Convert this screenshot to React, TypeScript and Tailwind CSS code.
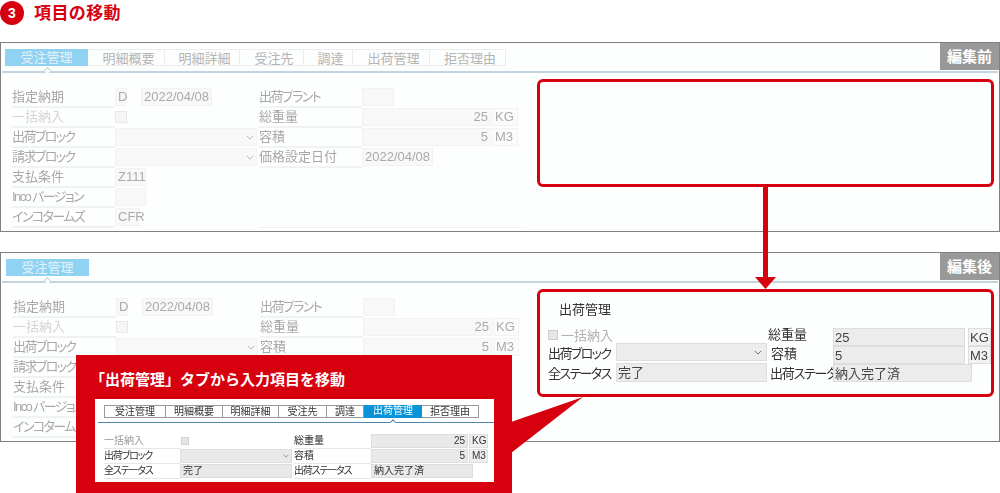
const tabs = [
  { name: "受注管理", w: "w-[83px]" },
  { name: "明細概要", w: "w-[77px]" },
  { name: "明細詳細", w: "w-[75px]" },
  { name: "受注先", w: "w-[64px]" },
  { name: "調達", w: "w-[49px]" },
  { name: "出荷管理", w: "w-[77px]" },
  { name: "拒否理由", w: "w-[76px]" },
];

const miniTabs = [
  { name: "受注管理", w: "w-[62px]" },
  { name: "明細概要", w: "w-[57px]" },
  { name: "明細詳細", w: "w-[56px]" },
  { name: "受注先", w: "w-[48px]" },
  { name: "調達", w: "w-[37px]" },
  { name: "出荷管理", w: "w-[58px]" },
  { name: "拒否理由", w: "w-[57px]" },
];

function Chevron({ className }: { className: string }) {
  return (
    <svg viewBox="0 0 10 6" className={className} fill="none" stroke="currentColor" strokeWidth="1.2">
      <path d="M1 1l4 4 4-4" />
    </svg>
  );
}

function Label({ children, faint, tight }: { children: React.ReactNode; faint?: boolean; tight?: boolean }) {
  return (
    <div className={`h-[20px] leading-[18px] border-b-2 border-[#f1f2f2] text-[13px] whitespace-nowrap [font-feature-settings:'palt'] ${tight ? "tracking-[-1.6px]" : ""} ${faint ? "text-[#d4d4d4]" : "text-[#a8a8a8]"}`}>
      {children}
    </div>
  );
}

function Field({ className, children }: { className: string; children?: React.ReactNode }) {
  return (
    <div className={`h-[18px] bg-[#f8f8f8] border border-[#f2f2f2] leading-[16px] text-[13px] text-[#aaaaaa] px-[2px] ${className}`}>
      {children}
    </div>
  );
}

function BackgroundForm() {
  return (
    <div className="grid grid-cols-[103px_144px_103px_160px] pl-[11px] blur-[0.3px]">
      <Label>指定納期</Label>
      <div className="flex gap-[14px]">
        <Field className="w-[12px]">D</Field>
        <Field className="w-[71px]">2022/04/08</Field>
      </div>
      <Label tight>出荷プラント</Label>
      <Field className="w-[32px]" />

      <Label faint>一括納入</Label>
      <div className="pt-[3px]">
        <div className="w-[12px] h-[12px] bg-[#f6f6f6] border border-[#e8e8e8]" />
      </div>
      <Label>総重量</Label>
      <div className="flex gap-[1px]">
        <Field className="w-[129px] text-right">25</Field>
        <Field className="w-[26px] bg-[#fbfbfb]">KG</Field>
      </div>

      <Label tight>出荷ブロック</Label>
      <div className="flex items-start">
        <Field className="w-[142px] flex items-center justify-end">
          <Chevron className="w-[8px] h-[5px] text-[#b5b5b5]" />
        </Field>
      </div>
      <Label>容積</Label>
      <div className="flex gap-[1px]">
        <Field className="w-[129px] text-right">5</Field>
        <Field className="w-[26px] bg-[#fbfbfb]">M3</Field>
      </div>

      <Label tight>請求ブロック</Label>
      <div className="flex items-start">
        <Field className="w-[142px] flex items-center justify-end">
          <Chevron className="w-[8px] h-[5px] text-[#b5b5b5]" />
        </Field>
      </div>
      <Label>価格設定日付</Label>
      <Field className="w-[71px]">2022/04/08</Field>

      <Label>支払条件</Label>
      <Field className="w-[31px]">Z111</Field>
      <div className="col-span-2" />

      <Label tight>Inco バージョン</Label>
      <Field className="w-[31px]" />
      <div className="col-span-2" />

      <Label tight>インコタームズ</Label>
      <Field className="w-[25px]">CFR</Field>
      <div className="col-span-2 border-b border-[#f3f3f3] h-[20px]" />
    </div>
  );
}

function Panel({ tag, allTabs, shift }: { tag: string; allTabs: boolean; shift: string }) {
  const list = allTabs ? tabs : tabs.slice(0, 1);
  return (
    <section className="relative h-[190px] border border-[#808080] bg-[#fdfefe]">
      <div className={`flex h-[17px] mt-[6px] ${shift}`}>
        {list.map((t, i) => (
          <div
            key={t.name}
            className={`${t.w} text-center text-[13px] leading-[17px] ${
              i === 0
                ? "bg-[#90d2f1] text-[#e4f3fb]"
                : "border-y border-r border-[#ececec] text-[#b4b4b4] pl-[5px]"
            }`}
          >
            {t.name}
          </div>
        ))}
      </div>
      <div className="relative mt-[5px] h-[2px] bg-[#c3d4df] mx-[1px]">
        <div className="absolute left-[43px] top-[-3px] w-[5px] h-[5px] rotate-45 bg-[#fdfefe] border-l border-t border-[#c3d4df]" />
      </div>
      <div className={`mt-[15px] ${allTabs ? "" : "pl-[1px]"}`}>
        <BackgroundForm />
      </div>
      <div className="absolute right-0 top-0 w-[59px] h-[27px] bg-[#999999] text-white text-[15px] font-bold leading-[27px] text-center">
        {tag}
      </div>
    </section>
  );
}

function MiniLabel({ children, faint, strong, tight }: { children: React.ReactNode; faint?: boolean; strong?: boolean; tight?: boolean }) {
  return (
    <div className={`h-[15px] leading-[14px] text-[10px] whitespace-nowrap border-b border-[#e6e6e6] [font-feature-settings:'palt'] ${tight ? "tracking-[-1.2px]" : ""} ${faint ? "text-[#9c9c9c]" : strong ? "text-[#222222]" : "text-[#333333]"}`}>
      {children}
    </div>
  );
}

function MiniField({ className, children }: { className: string; children?: React.ReactNode }) {
  return (
    <div className={`h-[14px] bg-[#e9e9e9] border border-[#dedede] px-[2px] leading-[12px] text-[10px] text-[#333333] ${className}`}>
      {children}
    </div>
  );
}

function Callout() {
  return (
    <div className="absolute left-[76px] top-[355px] w-[436px] h-[138px] bg-[#d7000f]">
      <p className="pl-[14px] pt-[14px] h-[44px] text-[15px] leading-[22px] font-bold text-white whitespace-nowrap">
        「出荷管理」タブから入力項目を移動
      </p>
      <div className="ml-[19px] w-[399px] h-[83px] bg-white blur-[0.2px]">
        <div className="flex h-[13px] pl-[9px] translate-y-[6px]">
          {miniTabs.map((t) => (
            <div
              key={t.name}
              className={`${t.w} text-center text-[10px] leading-[12px] ${
                t.name === "出荷管理"
                  ? "bg-[#0a93d6] text-white"
                  : "border border-l-0 border-[#9a9a9a] first:border-l text-[#333333]"
              }`}
            >
              {t.name}
            </div>
          ))}
        </div>
        <div className="relative mt-[10px] ml-[3px] h-[1px] bg-[#4f86ad]">
          <div className="absolute left-[293px] top-[-2px] w-[4px] h-[4px] rotate-45 bg-white border-l border-t border-[#4f86ad]" />
        </div>
        <div className="grid grid-cols-[76px_114px_77px_120px] pl-[9px] mt-[11px]">
          <MiniLabel faint>一括納入</MiniLabel>
          <div className="pl-[1px] pt-[3px]">
            <div className="w-[8px] h-[8px] bg-[#e6e6e6] border border-[#d0d0d0]" />
          </div>
          <MiniLabel strong>総重量</MiniLabel>
          <div className="flex gap-[1px]">
            <MiniField className="w-[97px] text-right">25</MiniField>
            <MiniField className="w-[19px] bg-[#efefef]">KG</MiniField>
          </div>

          <MiniLabel tight>出荷ブロック</MiniLabel>
          <MiniField className="w-[112px] flex items-center justify-end">
            <Chevron className="w-[6px] h-[4px] text-[#777777]" />
          </MiniField>
          <MiniLabel>容積</MiniLabel>
          <div className="flex gap-[1px]">
            <MiniField className="w-[97px] text-right">5</MiniField>
            <MiniField className="w-[19px] bg-[#efefef]">M3</MiniField>
          </div>

          <MiniLabel tight>全ステータス</MiniLabel>
          <MiniField className="w-[112px]">完了</MiniField>
          <MiniLabel tight>出荷ステータス</MiniLabel>
          <MiniField className="w-[102px]">納入完了済</MiniField>
        </div>
      </div>
    </div>
  );
}

function MovedField({ className, children }: { className: string; children?: React.ReactNode }) {
  return (
    <div className={`bg-[#ececec] border border-[#dddddd] px-[1px] leading-[18px] text-[13px] text-[#444444] ${className}`}>
      {children}
    </div>
  );
}

function AfterBox() {
  return (
    <div className="absolute left-[537px] top-[289px] w-[457px] h-[108px] border-[3px] border-[#d7000f] rounded-[6px] bg-[#fdfefe] blur-[0.25px]">
      <p className="pl-[19px] pt-[8px] h-[36px] text-[13px] leading-[20px] text-[#333333]">出荷管理</p>
      <div className="grid grid-cols-[68px_153px_64px_158px] pl-[8px] text-[13px] leading-[15px] text-[#333333] whitespace-nowrap [font-feature-settings:'palt']">
        <div className="flex items-center gap-[3px] h-[20px] -mt-[3px] text-[#b0b0b0]">
          <div className="w-[10px] h-[10px] shrink-0 bg-[#e6e6e6] border border-[#cccccc]" />
          一括納入
        </div>
        <div />
        <div className="-ml-[1px] -mt-[1px]">総重量</div>
        <div className="flex gap-[3px]">
          <MovedField className="h-[18px] w-[132px]">25</MovedField>
          <MovedField className="h-[18px] w-[23px] bg-[#f3f3f3]">KG</MovedField>
        </div>

        <div className="h-[20px] tracking-[-1.6px]">出荷ブロック</div>
        <MovedField className="h-[18px] -mt-[3px] w-[151px] flex items-center justify-end pr-[4px]">
          <Chevron className="w-[8px] h-[5px] text-[#666666]" />
        </MovedField>
        <div className="pl-[2px]">容積</div>
        <div className="flex gap-[3px]">
          <MovedField className="h-[18px] w-[132px]">5</MovedField>
          <MovedField className="h-[18px] w-[23px] bg-[#f3f3f3]">M3</MovedField>
        </div>

        <div className="tracking-[-1.6px]">全ステータス</div>
        <MovedField className="h-[19px] -mt-[3px] w-[151px]">完了</MovedField>
        <div className="overflow-hidden pl-[1px] tracking-[-1.2px]">出荷ステータス</div>
        <MovedField className="h-[18px] -mt-[2px] w-[139px]">納入完了済</MovedField>
      </div>
    </div>
  );
}

export default function App() {
  return (
    <main className="relative w-[1000px] h-[493px] overflow-hidden bg-white font-['Liberation_Sans','Noto_Sans_CJK_JP',sans-serif]">
      <header className="flex items-start gap-[10px] h-[42px] pt-[1px]">
        <div className="w-[24px] h-[24px] rounded-full bg-[#d7000f] text-white text-[14px] font-bold leading-[24px] text-center">
          3
        </div>
        <h1 className="text-[17px] leading-[25px] font-bold text-[#d7000f] tracking-[0.4px]">項目の移動</h1>
      </header>

      <div className="flex flex-col gap-[20px]">
        <Panel tag="編集前" allTabs shift="ml-[4px]" />
        <Panel tag="編集後" allTabs={false} shift="ml-[5px]" />
      </div>

      {/* red outline, arrow and callout sit over the panels */}
      <div className="absolute left-[537px] top-[79px] w-[457px] h-[108px] border-[3px] border-[#d7000f] rounded-[6px]" />
      <div className="absolute left-[763px] top-[187px] w-[5px] h-[91px] bg-[#d7000f]" />
      <svg className="absolute left-[755px] top-[277px] w-[21px] h-[12px]" viewBox="0 0 21 12">
        <path d="M0 0h21L10.5 12z" fill="#d7000f" />
      </svg>
      <AfterBox />
      <svg className="absolute left-[511px] top-[396px] w-[74px] h-[58px]" viewBox="0 0 74 58">
        <path d="M0 26L72 1 0 57z" fill="#d7000f" />
      </svg>
      <Callout />
    </main>
  );
}
